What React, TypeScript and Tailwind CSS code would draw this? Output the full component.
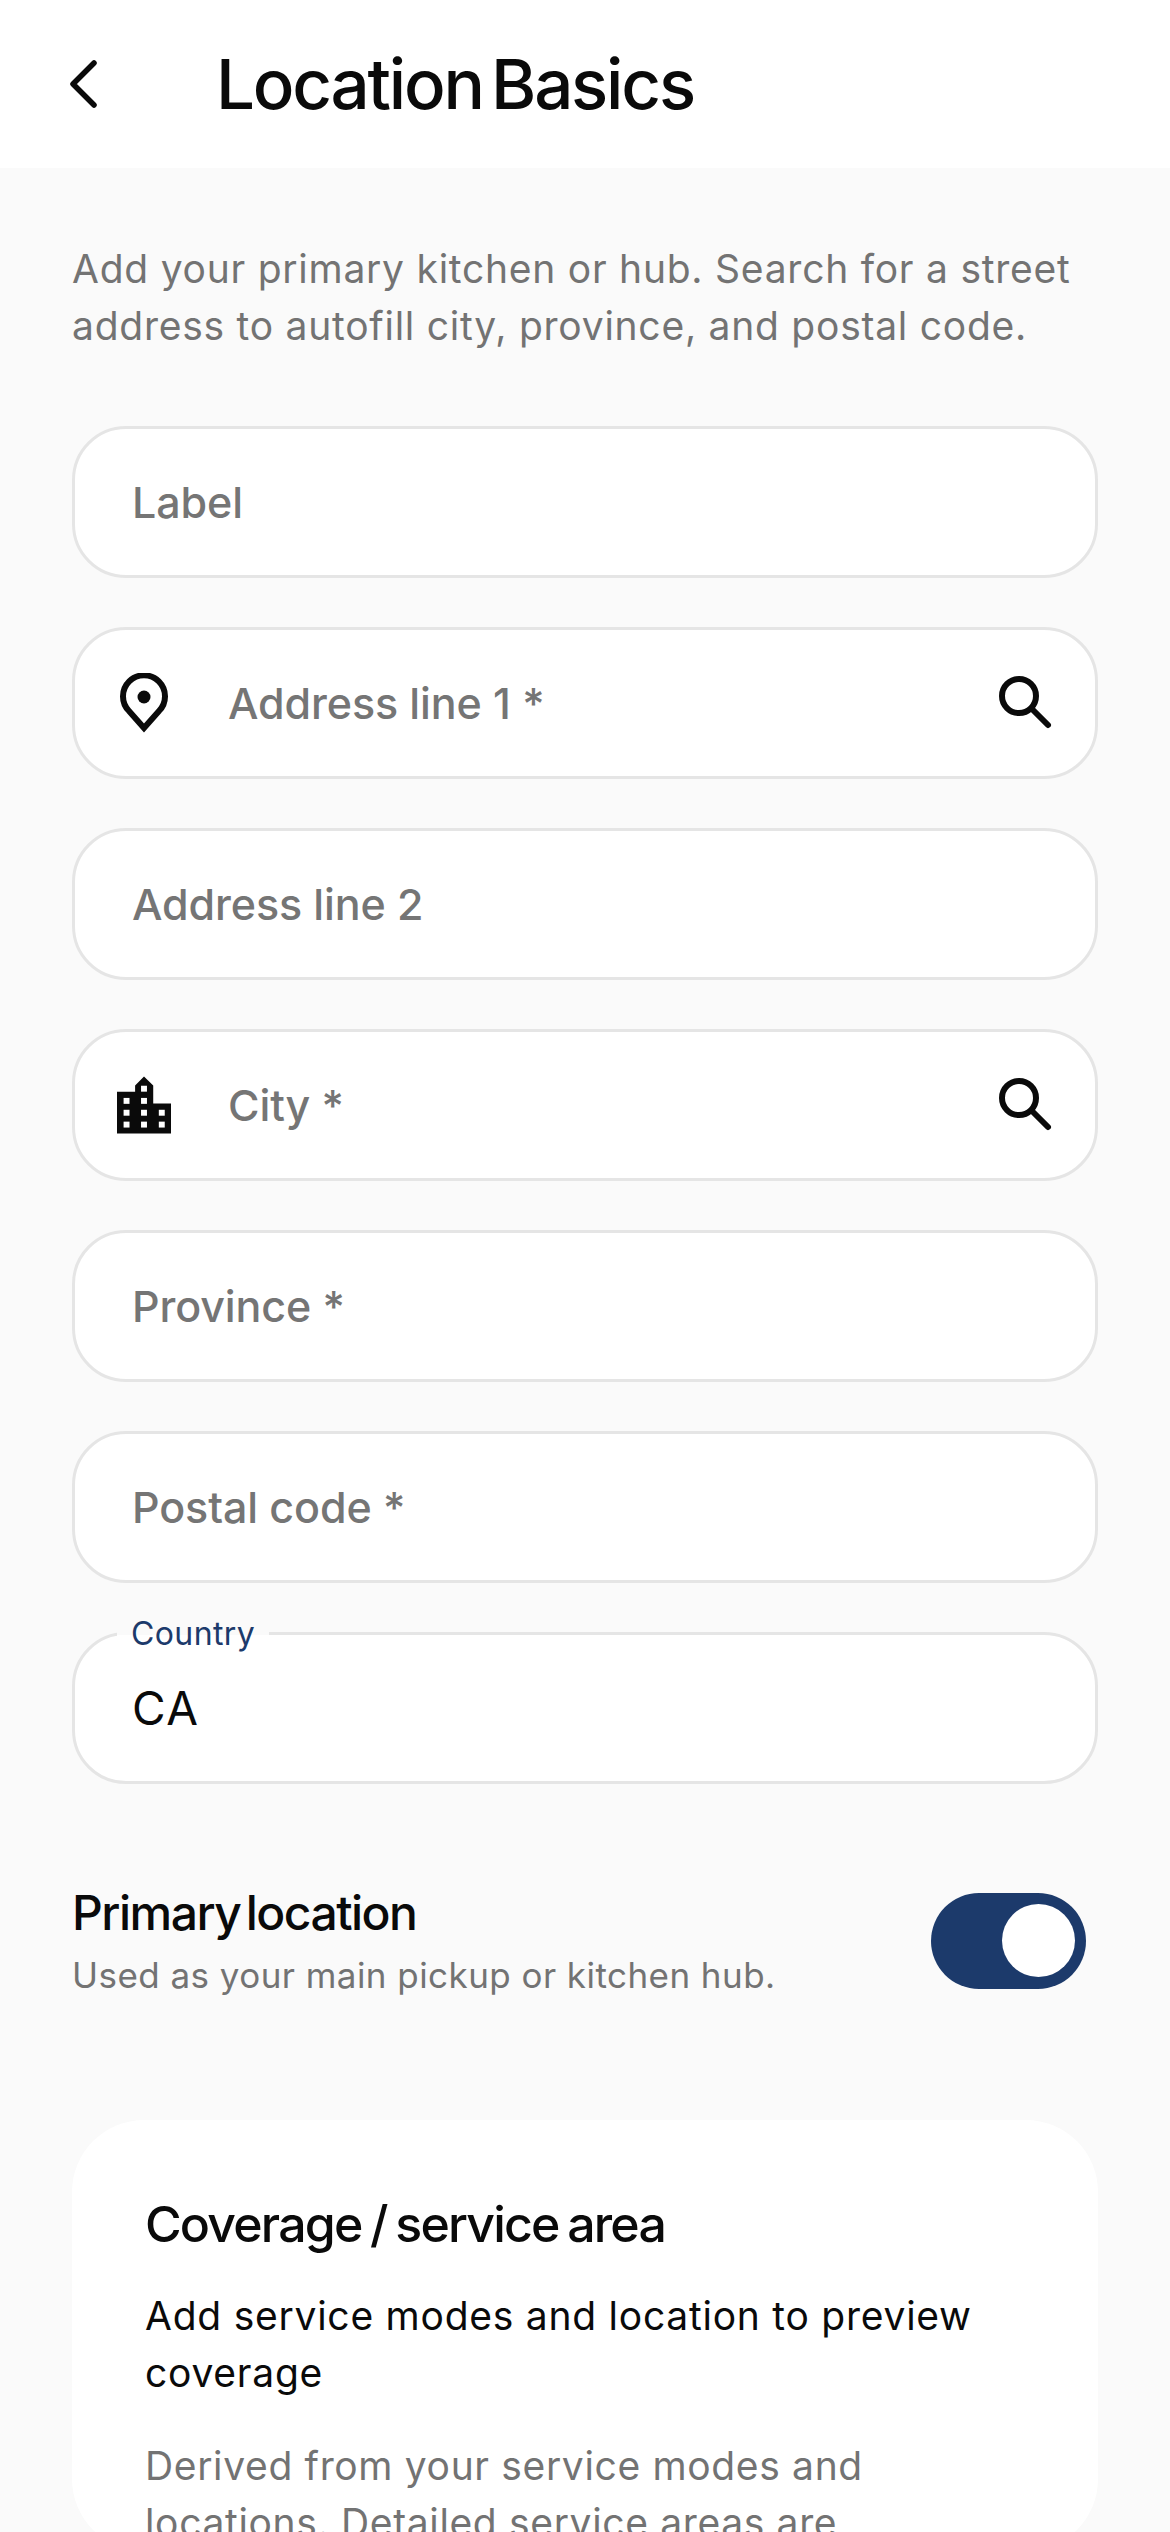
import React from "react";

function BackIcon() {
  return (
    <svg width="32" height="50" viewBox="0 0 32 50" fill="none" className="block">
      <path d="M26 4 L5 25 L26 46" stroke="#0a0a0a" strokeWidth="5.5" strokeLinecap="round" strokeLinejoin="round" />
    </svg>
  );
}

function PinIcon() {
  return (
    <svg width="48" height="60" viewBox="0 0 48 60" fill="none" className="block">
      <path d="M24 55 L9 38 A21 21 0 1 1 39 38 Z" stroke="#0a0a0a" strokeWidth="6" strokeLinejoin="miter" />
      <circle cx="24" cy="24" r="6.5" fill="#0a0a0a" />
    </svg>
  );
}

function CityIcon() {
  const windows = [
    [73, 28], [20, 65], [73, 65], [20, 101], [73, 101], [127, 101], [20, 137], [73, 137], [127, 137],
  ];
  return (
    <svg width="55" height="58" viewBox="0 0 164 173" className="block">
      <path d="M0 46 H55 V27 L82 0 L110 27 V82 H164 V173 H0 Z" fill="#0a0a0a" />
      {windows.map(([x, y]) => (
        <rect key={`${x}-${y}`} x={x} y={y} width="18" height="18" fill="#fff" />
      ))}
    </svg>
  );
}

function SearchIcon() {
  return (
    <svg width="54" height="54" viewBox="0 0 54 54" fill="none" className="block">
      <circle cx="20" cy="20" r="17" stroke="#0a0a0a" strokeWidth="6" />
      <path d="M33 33 L49 49" stroke="#0a0a0a" strokeWidth="6" strokeLinecap="round" />
    </svg>
  );
}

function Field({
  placeholder,
  value,
  label,
  left,
  right,
}: {
  placeholder?: string;
  value?: string;
  label?: string;
  left?: React.ReactNode;
  right?: React.ReactNode;
}) {
  return (
    <div className="relative flex h-[152px] items-center rounded-[54px] border-[3px] border-[#e5e5e5] bg-white">
      {label && (
        <span className="absolute -top-[22px] left-[42px] bg-[linear-gradient(#fafafa_52%,#ffffff_52%)] px-[14px] text-[32px] leading-[42px] tracking-[0.4px] text-[#1c3a6b]">
          {label}
        </span>
      )}
      {left && <div className="ml-[42px] flex w-[54px] shrink-0 justify-center">{left}</div>}
      <span
        className={
          value
            ? "pl-[57px] text-[46px] tracking-[1.5px] text-[#0a0a0a]"
            : "pl-[57px] text-[43px] font-medium tracking-[-0.1px] text-[#757575]"
        }
      >
        {value ?? placeholder}
      </span>
      {right && <div className="ml-auto pr-[42px]">{right}</div>}
    </div>
  );
}

export default function App() {
  return (
    <div className="h-[2532px] overflow-hidden bg-[#fafafa] font-['Inter',sans-serif]">
      {/* Header */}
      <header className="flex h-[168px] items-center bg-white pl-[68px]">
        <BackIcon />
        <h1 className="ml-[116px] pt-[2px] text-[69px] font-medium tracking-[-2.2px] text-[#0a0a0a] [word-spacing:-8px]">
          Location Basics
        </h1>
      </header>

      <main className="px-[72px]">
        <p className="mt-[72px] text-[39px] leading-[57px] tracking-[0.75px] text-[#737373]">
          Add your primary kitchen or hub. Search for a street address to autofill city, province, and postal code.
        </p>

        <div className="mt-[72px] flex flex-col gap-[49px]">
          <Field placeholder="Label" />
          <Field placeholder="Address line 1 *" left={<PinIcon />} right={<SearchIcon />} />
          <Field placeholder="Address line 2" />
          <Field placeholder="City *" left={<CityIcon />} right={<SearchIcon />} />
          <Field placeholder="Province *" />
          <Field placeholder="Postal code *" />
          <Field label="Country" value="CA" />
        </div>

        {/* Primary toggle */}
        <div className="mt-[97px] flex items-center justify-between pr-[12px]">
          <div>
            <div className="text-[48px] leading-[64px] font-medium tracking-[-1.5px] text-[#0a0a0a] [word-spacing:-6px]">
              Primary location
            </div>
            <div className="mt-[5px] text-[35px] leading-[50px] tracking-[0.45px] text-[#737373]">
              Used as your main pickup or kitchen hub.
            </div>
          </div>
          <div className="flex h-[96px] w-[155px] items-center justify-end rounded-full bg-[#1c3a6b] pr-[11px]">
            <div className="h-[73px] w-[73px] rounded-full bg-white" />
          </div>
        </div>

        {/* Coverage card */}
        <section className="mt-[120px] rounded-[72px] bg-white px-[73px] pt-[72px]">
          <h2 className="text-[50px] leading-[64px] font-medium tracking-[-1.8px] text-[#0a0a0a] [word-spacing:-3px]">
            Coverage / service area
          </h2>
          <p className="mt-[31px] text-[39px] leading-[57px] tracking-[0.75px] text-[#0a0a0a]">
            Add service modes and location to preview coverage
          </p>
          <p className="mt-[36px] text-[39px] leading-[57px] tracking-[0.65px] text-[#737373]">
            Derived from your service modes and locations. Detailed service areas are
          </p>
        </section>
      </main>
    </div>
  );
}
